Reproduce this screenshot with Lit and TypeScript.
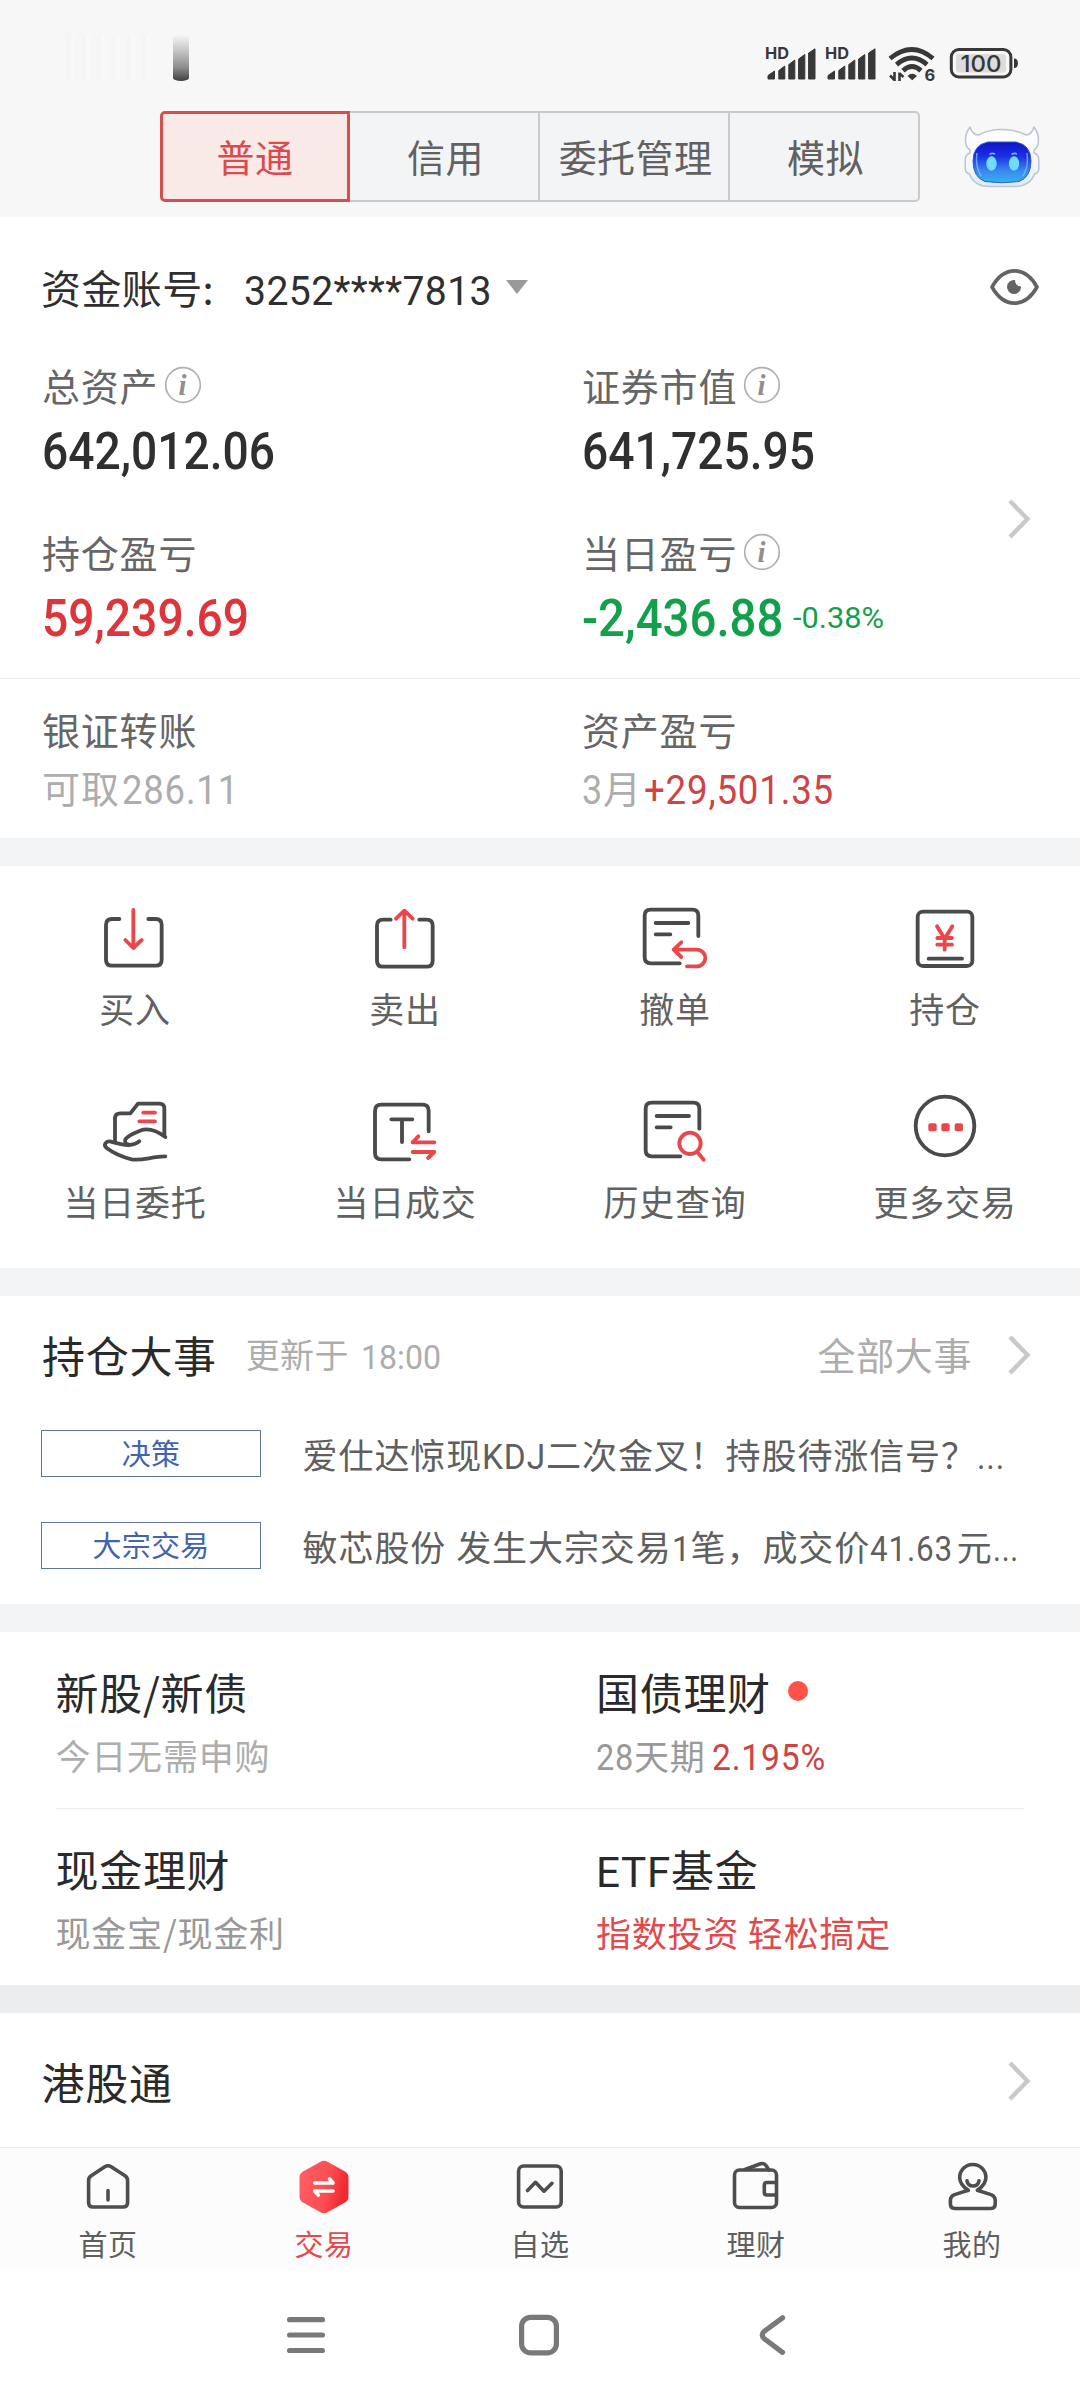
import { LitElement, html, css, svg, TemplateResult } from "lit";
import { customElement } from "lit/decorators.js";

/** Condensed latin / digit run: the svg box ends on the text's baseline. */
const num = (text: string, width: number, size: number, cls = "") => html`
  <svg class="num ${cls}" width=${width} height=${size * 0.711}>
    <text x="0" y=${size * 0.711} font-size=${size} textLength=${width} lengthAdjust="spacingAndGlyphs">${text}</text>
  </svg>`;

const chevron = html`<svg class="chev" width="24" height="42" viewBox="0 0 24 42">
  <path d="M2 3 L19.5 21 L2 39" /></svg>`;

const info = html`<svg class="info" width="38" height="38" viewBox="0 0 38 38">
  <circle cx="19" cy="19" r="17.3" />
  <text x="19" y="28.5" text-anchor="middle">i</text></svg>`;

interface Item { label: string; box: string; art: TemplateResult }

const items: Item[] = [
  { label: "买入", box: "177 66 216 216", art: svg`
    <path d="M238 117H216Q198 117 198 135V239Q198 257 216 257H347Q365 257 365 239V135Q365 117 347 117H325"/>
    <path class="r" d="M280 90V203M256 180L280 204L305 180"/>` },
  { label: "卖出", box: "987 66 216 216", art: svg`
    <path d="M1052 119H1029Q1011 119 1011 137V242Q1011 260 1029 260H1160Q1178 260 1178 242V137Q1178 119 1160 119H1138"/>
    <path class="r" d="M1093 202V94M1068 116L1093 92L1118 116"/>` },
  { label: "撤单", box: "237 66 216 216", art: svg`
    <path d="M415 168V107Q415 89 397 89H272Q254 89 254 107V232Q254 250 272 250H359M287 129H385M287 163H331"/>
    <path class="r" d="M364 187L341 209L364 231M343 209H411A24 24 0 0 1 411 259H381"/>` },
  { label: "持仓", box: "1047 66 216 216", art: svg`
    <rect x="1073" y="95" width="164" height="163" rx="16"/>
    <path d="M1106 236H1206"/>
    <path class="r" d="M1131 139L1154 176L1177 139M1154 176V209M1132 174H1176M1132 194H1176"/>` },
  { label: "当日委托", box: "177 645 216 216", art: svg`
    <path d="M225 784V716Q225 700 241 700H271L294 671H358Q373 671 373 686V769L376 771M376 771C345 748 322 743 300 752C280 760 262 768 256 778Q252 790 266 794M298 784Q283 796 264 795C245 795 232 790 213 785C197 781 189 795 200 804C224 822 250 832 275 838C305 844 335 829 376 829"/>
    <path class="r" d="M310 698H345M298 724H345"/>` },
  { label: "当日成交", box: "987 645 216 216", art: svg`
    <path d="M1166 754V693Q1166 674 1147 674H1024Q1005 674 1005 693V819Q1005 838 1024 838H1108M1054 718H1117M1086 718V786"/>
    <path class="r" d="M1183 787H1118L1135 769M1118 816H1183L1164 834"/>` },
  { label: "历史查询", box: "237 645 216 216", art: svg`
    <path d="M418 746V686Q418 668 400 668H275Q257 668 257 686V811Q257 829 275 829H361M290 708H387M290 742H332"/>
    <circle class="r" cx="390" cy="790" r="32"/><path class="r" d="M412 816L431 839"/>` },
  { label: "更多交易", box: "1047 645 216 216", art: svg`
    <circle cx="1155" cy="738" r="88"/>
    <g class="dots"><rect x="1105" y="730" width="25" height="24" rx="6"/><rect x="1144" y="730" width="25" height="24" rx="6"/><rect x="1184" y="730" width="25" height="24" rx="6"/></g>` },
];

const tabs: { label: string; art: TemplateResult; on?: boolean }[] = [
  { label: "首页", art: svg`<path d="M24.8 7.7Q28 5.8 31.2 7.7L45 16.8Q47.6 18.6 47.6 21.5V43.5Q47.6 48 43 48H13Q8.6 48 8.6 43.5V21.5Q8.6 18.6 11.2 16.8ZM28 31.5V41"/>` },
  { label: "交易", on: true, art: svg`
    <defs><linearGradient id="hex" x1="0" y1="0" x2="1" y2="0.25"><stop offset="0" stop-color="#ff6166"/><stop offset=".65" stop-color="#fb4d51"/><stop offset="1" stop-color="#ee2a30"/></linearGradient></defs>
    <path class="hex" d="M24.5 2.8Q28 .8 31.5 2.8L49 12.5Q52.5 14.5 52.5 18.5V37.5Q52.5 41.5 49 43.5L31.5 53.2Q28 55.2 24.5 53.2L7 43.5Q3.5 41.5 3.5 37.5V18.5Q3.5 14.5 7 12.5Z"/>
    <path class="w" d="M18.8 24H37M33.5 19.8L37 24M37 32H18.8M22.3 36.2L18.8 32"/>` },
  { label: "自选", art: svg`<rect x="6.6" y="7" width="42.6" height="41" rx="5"/><path d="M15.5 31.5L23.5 23.3L32 32.2L40 24.3"/>` },
  { label: "理财", art: svg`<rect x="6.5" y="11" width="42" height="37.5" rx="5"/><path d="M48 23.5H39Q36.3 23.5 36.3 26V33.5Q36.3 36 39 36H48M17 10.5L32.5 4.8Q36 3.6 38 6.6L41 11"/>` },
  { label: "我的", art: svg`<path d="M24.3 31.300C18.500 27.500 15.700 23 15.700 18.500A13.100 13 0 0 1 41.900 18.500C41.900 23 39 27.500 33.300 31.300L47 35.600Q51 37 51.200 41V44.800Q51.200 49.500 46.700 49.500H11Q6.400 49.500 6.400 44.800V41Q6.600 37 10.600 35.600L24.300 31.300M23 21.800Q24 27 29 27T35 21.800"/>` },
];

@customElement("app-root")
export class AppRoot extends LitElement {
  static styles = css`
    :host { display: block; width: 1080px; height: 2400px; background: #fff; color: #2f2f2f;
      font-family: "Noto Sans CJK SC", sans-serif; font-size: 38px; overflow: hidden; }
    * { box-sizing: border-box; }
    svg { display: block; flex: none; overflow: visible; }
    .num { font-family: Roboto, sans-serif; fill: currentColor; font-weight: 400; }
    .med { font-weight: 500; }
    .pale { color: #adadad; } .mid { color: #999; }
    .red { color: #dd353a; } .red2 { color: #d04344; } .red3 { color: #e04a4b; } .green { color: #12a04a; }
    .band { height: 28px; background: #f2f4f6; }
    .band.deep { background: #ebedee; }
    .top { height: 217px; background: #f7f7f7; }
    .status { height: 111px; display: flex; padding: 35px 0 0 60px; }
    .streak { width: 90px; height: 45px; margin-right: 22.5px;
      background: repeating-linear-gradient(90deg, #f7f7f7 0 6px, #f5f5f5 7px 10px, #f9f9f9 12px 15px); }
    .smear { width: 16px; height: 46px; border-radius: 0 0 8px 8px / 0 0 3px 3px;
      background: linear-gradient(#f7f7f7, #c4c4c4 35%, #8e8e8e 70%, #3f3f3f); filter: blur(.6px); }
    .sys { margin: 7px 0 0 572.5px; }
    .switch { display: flex; padding-left: 160px; align-items: center; height: 91px; }
    .seg { width: 190px; height: 91px; display: flex; align-items: center; justify-content: center;
      background: #f3f4f6; border: 2px solid #c9cacc; border-left-width: 0; color: #616161; letter-spacing: .4px; line-height: 46px; padding: 0 0 1px 3px; }
    .seg.on { background: #f9eae8; border: 3px solid #d4504f; color: #dc4a4e; border-radius: 5px 0 0 5px; padding-left: 0; }
    .seg:nth-child(4) { border-radius: 0 5px 5px 0; }
    .bot { margin: 0 0 0 44px; }
    .account { height: 621px; padding-top: 45.6px; }
    .row { display: flex; align-items: baseline; }
    .acct { height: 49px; line-height: 48px; font-size: 40px; letter-spacing: .4px; padding: 0 41px 0 41px; }
    .acct .num { margin: 0 0 -1.4px 30px; }
    .acct .num text { transform: translateY(1.4px); }
    .tri { align-self: center; margin-left: 14px; fill: #999; }
    .eye { align-self: center; margin: -1px 0 0 auto; fill: none; stroke: #636363; stroke-width: 3.6; }
    .main { display: flex; margin-top: 50px; height: 317px; align-items: flex-start; border-bottom: 1.5px solid #ebebeb; }
    .cols { display: grid; grid-template-columns: 540px 427px; }
    .cols2 { display: grid; grid-template-columns: 540px 540px; }
    .cell { padding-left: 42px; }
    .lab { height: 46px; line-height: 46px; color: #666; letter-spacing: .8px; display: flex; align-items: center; }
    .val { margin-top: 24.8px; height: 36.6px; display: flex; align-items: flex-end; }
    .pct { margin: 0 0 7.6px 9.5px; }
    .lower { margin-top: 60.4px; }
    .lower .val { margin-top: 24px; }
    .chev { fill: none; stroke: #c9c9c9; stroke-width: 4.4; }
    .main .chev { margin: 136px 0 0 41px; }
    .info { fill: none; stroke: #b0b0b0; stroke-width: 1.7; margin: 0 0 0 5.5px; }
    .info text { font: italic 700 29px "Liberation Serif", serif; fill: #8f8f8f; stroke: none; }
    .funds { margin-top: 27.4px; }
    .line { height: 46px; line-height: 46px; margin-top: 12.5px; letter-spacing: .9px; }
    .grid { height: 402px; padding-top: 36px; display: grid; grid-template-columns: repeat(4, 270px); grid-auto-rows: 193px; }
    .item { display: flex; flex-direction: column; align-items: center; font-size: 35px; line-height: 42px; letter-spacing: .8px; color: #616161; }
    .item svg { margin-bottom: 13.2px; fill: none; stroke: #4a4a4a; stroke-width: 11.5; stroke-linecap: round; stroke-linejoin: round; }
    .item .r { stroke: #e8474b; }
    .dots { fill: #e8474b; stroke: none; }
    .events { height: 308px; padding: 32px 0 0 42px; }
    .head { height: 52px; line-height: 52px; display: flex; align-items: center; margin-bottom: 50px; }
    .title { font-size: 43px; letter-spacing: .7px; color: #2a2a2a; line-height: 52px; }
    .hk .title { margin-left: -.5px; }
    .upd { font-size: 34px; letter-spacing: .3px; margin-left: 29px; }
    .head .num { margin: 6px 0 0 12px; }
    .all { margin-left: auto; letter-spacing: .6px; }
    .head .chev { margin: 1.5px 48px 0 36px; }
    .news { display: flex; align-items: center; height: 47px; margin-bottom: 45px; margin-left: -1px; }
    .tag { width: 220px; height: 47px; border: 1.5px solid #5f759c; color: #4263ad; font-size: 29px; letter-spacing: .3px;
      display: flex; justify-content: center; line-height: 43px; margin-right: 41.6px; }
    .txt { display: flex; align-items: baseline; font-size: 35px; letter-spacing: .9px; line-height: 42px; color: #5f5f5f; white-space: pre; }
    .gap { width: 10px; } .gap.slim { width: 6.5px; } .gap.hair { width: 2px; } .gap.mini { width: 3.5px; }
    .wealth { height: 353px; padding-top: 33px; }
    .wealth .cell { padding-left: 55.5px; }
    .wealth .cell + .cell { padding-left: 56px; }
    .sub { font-size: 35px; letter-spacing: .8px; line-height: 42px; height: 42px; margin-top: 17px; white-space: pre; }
    .rule { height: 1.5px; background: #ebebeb; margin: 31.5px 56px 33px; }
    .dot { width: 20px; height: 20px; border-radius: 50%; background: #ff5248; align-self: center; margin: 0 0 0 17px; }
    .hk { height: 134px; display: flex; align-items: center; padding: 2px 48px 0 42px; justify-content: space-between; }
    .tabs { height: 124px; display: grid; grid-template-columns: repeat(5, 216px); background: #fcfcfc; border-top: 1.5px solid #e8e8e8; padding-top: 10.5px; }
    .tab { display: flex; flex-direction: column; align-items: center; font-size: 29px; letter-spacing: .5px; line-height: 36px; color: #5e5e5e; }
    .tab svg { margin-bottom: 10px; fill: none; stroke: #4e4e4e; stroke-width: 3.6; stroke-linecap: round; stroke-linejoin: round; }
    .tab.on { color: #e8484b; }
    .tab .hex { fill: url(#hex); stroke: none; }
    .tab .w { stroke: #fff; stroke-width: 3.6; }
    .nav { height: 129px; display: grid; grid-template-columns: repeat(3, 233px); padding: 0 0 1px 189.5px; justify-items: center; align-items: center; }
    .nav svg { fill: none; stroke: #797979; stroke-width: 5.2; stroke-linecap: round; stroke-linejoin: round; }
  `;

  private metric(label: string, value: TemplateResult, hasInfo = true) {
    return html`<div class="cell"><div class="lab">${label}${hasInfo ? info : ""}</div><div class="val">${value}</div></div>`;
  }

  private signal(x: number) {
    return svg`<g transform="translate(${x} 0)">
      <text x="-1" y="17.4" font-size="16.5" font-weight="700" textLength="24" lengthAdjust="spacingAndGlyphs">HD</text>
      <path d="M2 37V33.5L8.5 29V37ZM12.8 37V28.5L18.8 24V37ZM22.8 37V22.5L28.8 18V37ZM32.6 37V17L38.8 12.5V37ZM42.6 37V11L49 6.8V37Z"
        stroke="#383838" stroke-width="1" stroke-linejoin="round"/></g>`;
  }

  render() {
    return html`
      <div class="top">
        <div class="status">
          <div class="streak"></div><div class="smear"></div>
          <svg class="sys" width="260" height="40" viewBox="0 0 260 40" fill="#383838" font-family="Inter, sans-serif">
            ${this.signal(5)}${this.signal(65)}
            <g fill="none" stroke="#383838" stroke-width="4.8">
              <path d="M129 16.5Q151 -1.5 172 16.500"/><path d="M135.500 22.600Q151 9.500 166 22.600"/><path d="M142 28.600Q151 20.500 160 28.600"/>
              <path stroke-width="2.6" d="M133.5 30V39M133.5 38L129 33.5M138.5 39V30.5M138.5 31.5L142.5 35"/>
            </g>
            <path d="M146.5 34Q151 29.5 156 34L151.2 38.2Z"/>
            <text x="163.5" y="38.5" font-size="16.5" font-weight="700">6</text>
            <rect x="190.3" y="7.5" width="59.6" height="27.4" rx="7.5" fill="none" stroke="#383838" stroke-width="3"/>
            <rect x="195" y="12" width="50" height="18.5" rx="3.5" fill="#dcdcdc"/>
            <path d="M253 16.5Q257 16.5 257 21.3T253 26Z"/>
            <text x="199.5" y="29.8" font-size="23.5" font-weight="500" textLength="41" lengthAdjust="spacingAndGlyphs">100</text>
          </svg>
        </div>
        <div class="switch">
          <div class="seg on">普通</div><div class="seg">信用</div><div class="seg">委托管理</div><div class="seg">模拟</div>
          <svg class="bot" width="76" height="62" viewBox="0 0 76 62">
            <defs>
              <linearGradient id="face" x1="0" y1="0" x2="0" y2="1"><stop offset="0" stop-color="#1012c4"/><stop offset=".35" stop-color="#1a2fe6"/><stop offset=".7" stop-color="#3b86ee"/><stop offset="1" stop-color="#35b4ee"/></linearGradient>
              <linearGradient id="helm" x1="0" y1="0" x2="0" y2="1"><stop offset="0" stop-color="#fff"/><stop offset=".7" stop-color="#f3f5fc"/><stop offset="1" stop-color="#dcecf8"/></linearGradient>
            </defs>
            <path fill="url(#helm)" stroke="#bcc3d8" stroke-width="1.5" stroke-linejoin="round"
              d="M6 1Q8.500 9 14.500 9Q24 3.500 38 3.500T62 9Q67.500 9 70 1Q76 9 74 18Q73.500 22 70 24V27Q74.800 28.500 74.800 34V42Q74.800 47 70.500 48Q66 60.500 50 60.500H26Q10 60.500 5.500 48Q1.200 47 1.200 42V34Q1.200 28.500 6 27V24Q2.500 22 2 18Q0 9 6 1Z"/>
            <path fill="url(#face)" stroke="#2c62c4" stroke-width="1" d="M24 16H52Q67 19 67 35T55 55.500Q38 58 21 55.500Q9 51 9 35T24 16Z"/>
            <path fill="none" stroke="#7fb4ff" stroke-width="1.500" opacity=".8" d="M13 27Q11 40 17 50M63 27Q65 40 59 50"/>
            <ellipse cx="27.500" cy="37.500" rx="5.200" ry="7.200" fill="#6fdcff"/><ellipse cx="50" cy="37.500" rx="5.200" ry="7.200" fill="#6fdcff"/>
            <path d="M25.500 28.500Q28 26.500 31 28M47.500 28.500Q50 26.500 53 28" fill="none" stroke="#8ea6ff" stroke-width="1.600"/>
          </svg>
        </div>
      </div>

      <div class="account">
        <div class="row acct">资金账号:${num("3252****7813", 248, 41)}
          <svg class="tri" width="22" height="14" viewBox="0 0 22 14"><path d="M0 0H22L11 14Z"/></svg>
          <svg class="eye" width="49" height="36" viewBox="0 0 49 36"><path d="M2 18C14 -3.500 35 -3.500 47 18C35 39.500 14 39.500 2 18Z" stroke-linejoin="round"/>
            <path d="M25 11A7 7 0 1 0 31 17.500Q25.500 17.500 25 11Z" fill="#636363" stroke="none"/></svg>
        </div>
        <div class="main">
          <div>
            <div class="cols">
              ${this.metric("总资产", num("642,012.06", 233, 51.4, "med"))}
              ${this.metric("证券市值", num("641,725.95", 233, 51.4, "med"))}
            </div>
            <div class="cols lower">
              ${this.metric("持仓盈亏", num("59,239.69", 207, 51.4, "med red"), false)}
              ${this.metric("当日盈亏", html`${num("-2,436.88", 201.5, 51.4, "med green")}<span class="pct">${num("-0.38%", 91, 28.6, "green")}</span>`)}
            </div>
          </div>
          ${chevron}
        </div>
        <div class="cols2 funds">
          <div class="cell"><div class="lab">银证转账</div><div class="row line pale">可取<i class="gap hair"></i>${num("286.11", 117, 40.4)}</div></div>
          <div class="cell"><div class="lab">资产盈亏</div><div class="row line pale">${num("3", 21, 40.4)}月<i class="gap hair"></i>${num("+29,501.35", 190, 40.4, "red2")}</div></div>
        </div>
      </div>
      <div class="band"></div>

      <div class="grid">
        ${items.map(i => html`<div class="item"><svg width="72" height="72" viewBox=${i.box}>${i.art}</svg>${i.label}</div>`)}
      </div>
      <div class="band"></div>

      <div class="events">
        <div class="head"><span class="title">持仓大事</span><span class="upd pale">更新于</span>${num("18:00", 80, 34, "pale")}
          <span class="all pale">全部大事</span>${chevron}</div>
        <div class="news"><div class="tag">决策</div><div class="txt"><span>爱仕达惊现</span>${num("KDJ", 64, 35)}<span>二次金叉！持股待涨信号？</span>${num("...", 28, 35)}</div></div>
        <div class="news"><div class="tag">大宗交易</div><div class="txt"><span>敏芯股份</span><i class="gap"></i><span>发生大宗交易</span>${num("1", 19, 35)}<span>笔，成交价</span>${num("41.63", 83, 35)}<i class="gap mini"></i><span>元</span>${num("...", 26, 35)}</div></div>
      </div>
      <div class="band"></div>

      <div class="wealth">
        <div class="cols2">
          <div class="cell"><div class="title">新股/新债</div><div class="sub pale">今日无需申购</div></div>
          <div class="cell"><div class="row title">国债理财<i class="dot"></i></div>
            <div class="row sub mid">${num("28", 38, 36)}天期<i class="gap slim"></i>${num("2.195%", 114, 36, "red2")}</div></div>
        </div>
        <div class="rule"></div>
        <div class="cols2">
          <div class="cell"><div class="title">现金理财</div><div class="sub mid">现金宝/现金利</div></div>
          <div class="cell"><div class="row title">${num("ETF", 75, 42.5)}基金</div><div class="sub red3">指数投资 轻松搞定</div></div>
        </div>
      </div>
      <div class="band deep"></div>

      <div class="hk"><span class="title">港股通</span>${chevron}</div>

      <div class="tabs">
        ${tabs.map(t => html`<div class="tab ${t.on ? "on" : ""}"><svg width="56" height="56" viewBox="0 0 56 56">${t.art}</svg>${t.label}</div>`)}
      </div>
      <div class="nav">
        <svg width="38" height="40" viewBox="0 0 38 40"><path d="M2.600 4.700H35.400M2.600 20H35.400M2.600 35.500H35.400"/></svg>
        <svg width="40" height="40" viewBox="0 0 40 40"><rect x="2.600" y="2.300" width="34.800" height="35.600" rx="9"/></svg>
        <svg width="26" height="40" viewBox="0 0 26 40"><path d="M23.500 2.800L5 16.500Q1.500 20 5 23.500L23.500 37.300"/></svg>
      </div>
    `;
  }
}
